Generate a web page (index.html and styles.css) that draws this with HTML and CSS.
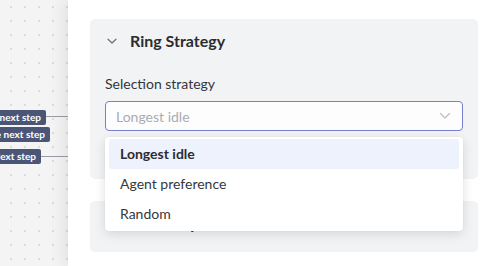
FILE: index.html
```html
<!DOCTYPE html>
<html>
<head>
<meta charset="utf-8">
<link rel="stylesheet" href="styles.css">
</head>
<body>
<div class="app">
  <div class="canvas">
    <div class="node n1">d next step</div>
    <div class="edge e1"></div>
    <div class="node n2">e next step</div>
    <div class="node n3">Next step</div>
    <div class="edge e3"></div>
  </div>
  <div class="panel">
    <section class="card card-ring">
      <div class="card-head">
        <svg class="chev" viewBox="0 0 12 12" width="12" height="12"><path d="M2 4.2 L6 8 L10 4.2" fill="none" stroke="#6b6f78" stroke-width="1.2" stroke-linecap="round" stroke-linejoin="round"/></svg>
        <h2 class="card-title">Ring Strategy</h2>
      </div>
      <div class="field">
        <label class="field-label">Selection strategy</label>
        <div class="select">
          <span class="select-placeholder">Longest idle</span>
          <svg class="select-chev" viewBox="0 0 14 14" width="14" height="14"><path d="M2.5 4.5 L7 9 L11.5 4.5" fill="none" stroke="#b9bcc4" stroke-width="1.1" stroke-linecap="round" stroke-linejoin="round"/></svg>
        </div>
        <ul class="menu">
          <li class="menu-item active">Longest idle</li>
          <li class="menu-item">Agent preference</li>
          <li class="menu-item">Random</li>
        </ul>
      </div>
    </section>
    <section class="card card-next">
      <div class="card-head">
        <svg class="chev" viewBox="0 0 12 12" width="12" height="12"><path d="M2 4.2 L6 8 L10 4.2" fill="none" stroke="#6b6f78" stroke-width="1.2" stroke-linecap="round" stroke-linejoin="round"/></svg>
        <h2 class="card-title">Next step</h2>
      </div>
    </section>
  </div>
</div>
</body>
</html>
```

FILE: styles.css
```css
* { box-sizing: border-box; }
html, body { margin: 0; padding: 0; }
body {
  width: 500px;
  height: 266px;
  overflow: hidden;
  font-family: Lato, "Open Sans", sans-serif;
  background: #ffffff;
}
.app {
  display: flex;
  height: 266px;
}
.canvas {
  position: relative;
  width: 68px;
  flex: none;
  background-color: #f4f4f5;
  background-image: radial-gradient(circle, #dadbde 0.9px, transparent 1.2px);
  background-size: 14px 14px;
  background-position: 4px 0px;
}
.node {
  position: absolute;
  left: 0;
  height: 15px;
  padding: 0 5px 0 2px;
  background: #4b5677;
  color: #ffffff;
  font-size: 10px;
  font-weight: 700;
  line-height: 15px;
  border-radius: 0 2px 2px 0;
  white-space: nowrap;
}
.n1 { top: 110px; width: 46px; text-align: right; overflow: hidden; direction: rtl; }
.n2 { top: 127px; width: 50px; text-align: right; overflow: hidden; direction: rtl; }
.n3 { top: 149px; width: 41px; text-align: right; overflow: hidden; direction: rtl; }
.edge {
  position: absolute;
  height: 1px;
  background: #9a9ca3;
  right: 0;
}
.e1 { top: 116px; left: 46px; }
.e3 { top: 156px; left: 41px; }
.panel {
  flex: 1;
  position: relative;
  background: #ffffff;
  box-shadow: -6px 0 14px rgba(0, 0, 0, 0.07);
  padding: 19px 22px 0 22px;
  display: flex;
  flex-direction: column;
  gap: 22px;
}
.card {
  background: #f2f3f5;
  border-radius: 5px;
  padding: 11px 15px 0 15px;
}
.card-ring { height: 160px; }
.card-next { height: 51px; }
.card-head {
  display: flex;
  align-items: center;
  height: 22px;
}
.chev {
  margin-left: 1px;
  margin-right: 12px;
  flex: none;
}
.card-title {
  margin: 0;
  font-size: 16px;
  font-weight: 700;
  color: #2b2c30;
  line-height: 22px;
}
.field {
  position: relative;
  margin-top: 22px;
}
.field-label {
  display: block;
  font-size: 14px;
  color: #34363b;
  line-height: 20px;
  margin-bottom: 7px;
}
.select {
  height: 30px;
  border: 1px solid #7880cc;
  border-radius: 4px;
  background: #fdfdfe;
  display: flex;
  align-items: center;
  justify-content: space-between;
  padding: 0 10px 0 10px;
}
.select-placeholder {
  font-size: 14px;
  color: #a9acb3;
}
.select-chev { flex: none; }
.menu {
  position: absolute;
  left: 0;
  right: 0;
  top: 63px;
  margin: 0;
  padding: 2px 4px;
  list-style: none;
  background: #ffffff;
  border-radius: 4px;
  box-shadow: 0 3px 12px rgba(0, 0, 0, 0.12), 0 0 2px rgba(0, 0, 0, 0.06);
  z-index: 5;
}
.menu-item {
  height: 30px;
  line-height: 30px;
  padding-left: 11px;
  font-size: 14px;
  color: #35373c;
  border-radius: 3px;
}
.menu-item.active {
  background: #eef2fd;
  font-weight: 700;
  color: #2b2c30;
}
```
